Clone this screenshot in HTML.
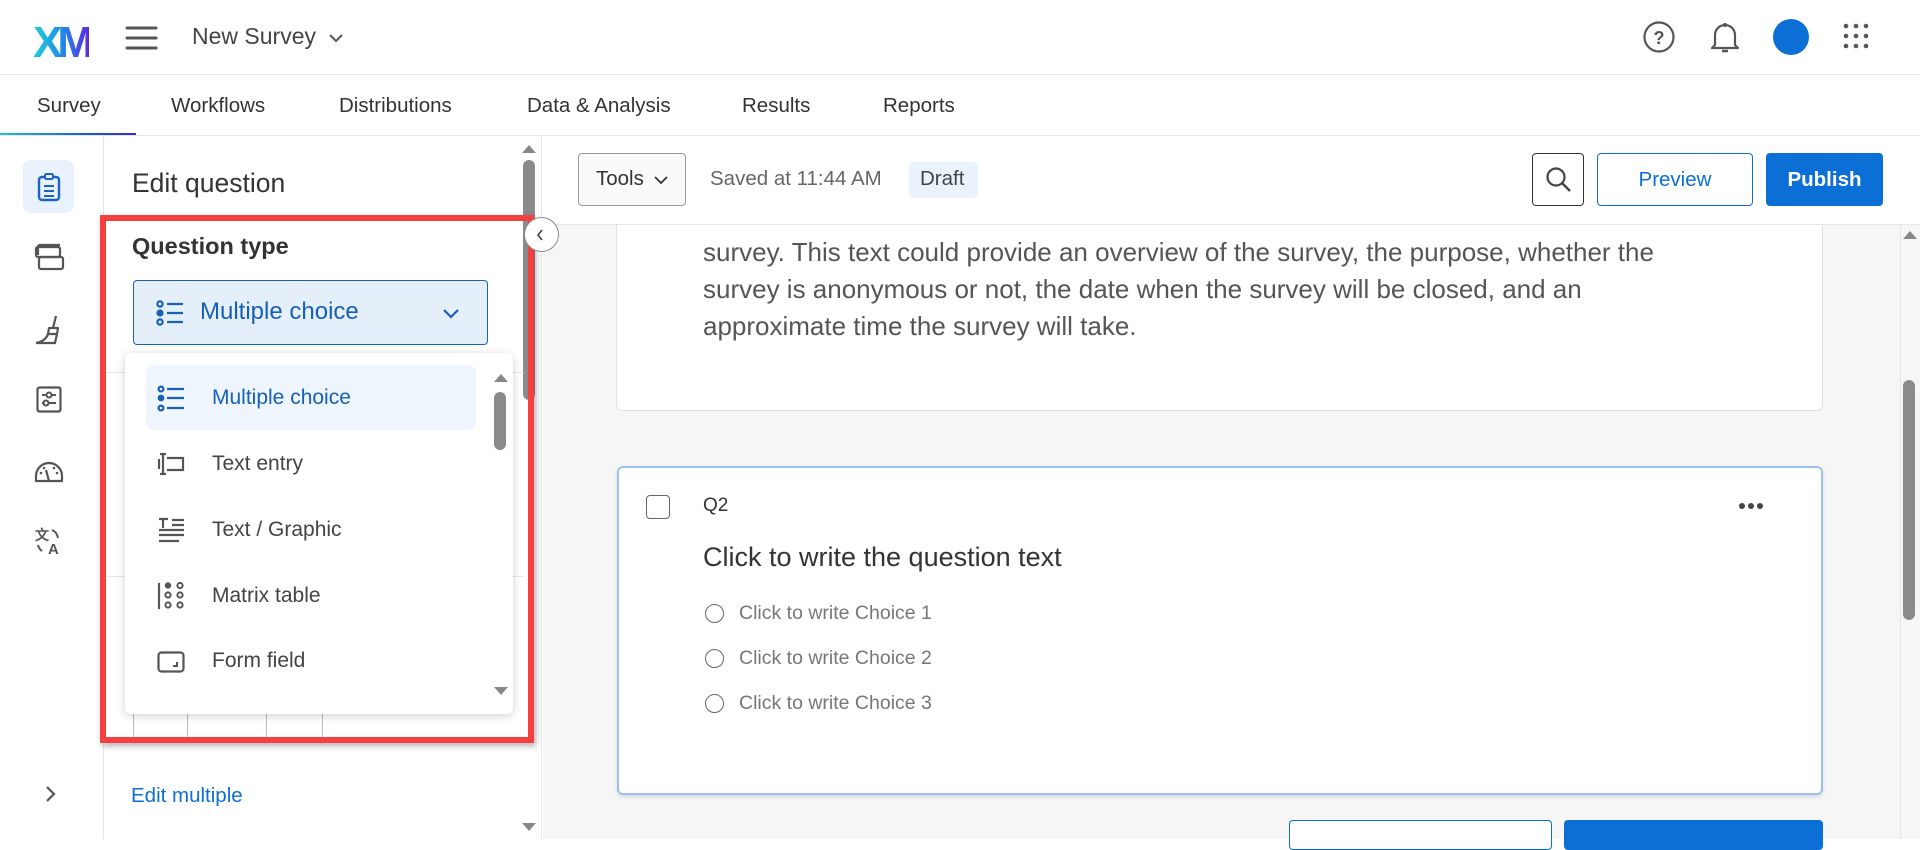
<!DOCTYPE html>
<html><head><meta charset="utf-8"><style>
*{box-sizing:border-box;margin:0;padding:0}
body{width:1920px;height:839px;overflow:hidden;font-family:"Liberation Sans",sans-serif;background:#fff;position:relative;color:#333}
.a{position:absolute}
svg{position:absolute;overflow:visible}
</style></head><body>
<!-- header -->
<div class="a" style="left:33px;top:18px;font:bold 44px 'Liberation Sans';letter-spacing:-5px;background:linear-gradient(90deg,#1fd0d8,#1d8de8 50%,#5b2ce0);-webkit-background-clip:text;color:transparent;line-height:50px">XM</div>
<svg style="left:126px;top:26px" width="32" height="24"><path d="M1 2H30M1 12H30M1 22H30" stroke="#555" stroke-width="3" stroke-linecap="round"/></svg>
<div class="a" style="left:192px;top:23px;font-size:23px;color:#444">New Survey</div>
<svg style="left:328px;top:33px" width="16" height="10"><path d="M2 2L8 8L14 2" stroke="#555" stroke-width="2" fill="none"/></svg>
<svg style="left:1643px;top:21px" width="32" height="32"><circle cx="16" cy="16" r="14.5" stroke="#555" stroke-width="2.2" fill="none"/><text x="16" y="23" font-size="18" font-weight="bold" text-anchor="middle" fill="#555" font-family="Liberation Sans">?</text></svg>
<svg style="left:1710px;top:20px" width="30" height="34"><path d="M5 25V15A10 10 0 0 1 25 15V25L28 28H2Z" stroke="#555" stroke-width="2.2" fill="none" stroke-linejoin="round"/><path d="M12 31H18" stroke="#555" stroke-width="2.5"/><circle cx="15" cy="5" r="2" fill="#555"/></svg>
<div class="a" style="left:1773px;top:19px;width:36px;height:36px;border-radius:50%;background:#0b6fd6"></div>
<svg style="left:1843px;top:24px" width="28" height="26"><g fill="#555"><circle cx="3" cy="2" r="2.3"/><circle cx="13" cy="2" r="2.3"/><circle cx="23" cy="2" r="2.3"/><circle cx="3" cy="12" r="2.3"/><circle cx="13" cy="12" r="2.3"/><circle cx="23" cy="12" r="2.3"/><circle cx="3" cy="22" r="2.3"/><circle cx="13" cy="22" r="2.3"/><circle cx="23" cy="22" r="2.3"/></g></svg>
<div class="a" style="left:0;top:74px;width:1920px;height:1px;background:#e6e6e6"></div>
<!-- tabs -->
<div class="a" style="top:94px;font-size:20.5px;color:#333;left:0;width:1920px;height:30px">
<span class="a" style="left:37px">Survey</span><span class="a" style="left:171px">Workflows</span><span class="a" style="left:339px">Distributions</span><span class="a" style="left:527px">Data &amp; Analysis</span><span class="a" style="left:742px">Results</span><span class="a" style="left:883px">Reports</span></div>
<div class="a" style="left:0;top:133px;width:136px;height:3px;background:linear-gradient(90deg,#1fc2d0,#1b5fd0 60%,#3a2ad0)"></div>
<div class="a" style="left:0;top:135px;width:1920px;height:1px;background:#e6e6e6"></div>
<!-- left rail -->
<div class="a" style="left:103px;top:136px;width:1px;height:703px;background:#e6e6e6"></div>
<div class="a" style="left:23px;top:160px;width:51px;height:53px;border-radius:8px;background:#e8f1fc"></div>
<svg style="left:37px;top:172px" width="24" height="30"><rect x="2" y="5" width="20" height="23" rx="3" stroke="#1a64c8" stroke-width="2.4" fill="none"/><rect x="8" y="2" width="8" height="5" rx="1.5" stroke="#1a64c8" stroke-width="2" fill="#e8f1fc"/><path d="M7 14H17M7 19H17M7 24H17" stroke="#1a64c8" stroke-width="2"/></svg>
<svg style="left:34px;top:243px" width="30" height="30"><path d="M4 12V4a2 2 0 0 1 2-2h20" stroke="#555" stroke-width="2.2" fill="none"/><rect x="2" y="4" width="24" height="10" rx="2" stroke="#555" stroke-width="2.2" fill="none"/><rect x="5" y="14" width="24" height="12" rx="2" stroke="#555" stroke-width="2.2" fill="none"/></svg>
<svg style="left:34px;top:314px" width="30" height="32"><path d="M22 2L19 14M15 14H24L23 20H14Z" stroke="#555" stroke-width="2.2" fill="none" stroke-linejoin="round"/><path d="M14 20C12 26 7 28 2 29H21L23 20" stroke="#555" stroke-width="2.2" fill="none"/></svg>
<svg style="left:36px;top:386px" width="26" height="27"><rect x="1.5" y="1.5" width="23" height="24" rx="2" stroke="#555" stroke-width="2.2" fill="none"/><path d="M6 9H20M6 17H20" stroke="#555" stroke-width="2"/><circle cx="13" cy="9" r="2.5" fill="#fff" stroke="#555" stroke-width="2"/><circle cx="10" cy="17" r="2.5" fill="#fff" stroke="#555" stroke-width="2"/></svg>
<svg style="left:34px;top:461px" width="30" height="22"><path d="M2 20V15A13 13 0 0 1 28 15V20Z" stroke="#555" stroke-width="2.2" fill="none" stroke-linejoin="round"/><path d="M15 20L12 9" stroke="#555" stroke-width="2.2"/><g fill="#555"><circle cx="7" cy="12" r="1.3"/><circle cx="10" cy="7" r="1.3"/><circle cx="20" cy="7" r="1.3"/><circle cx="23" cy="12" r="1.3"/></g></svg>
<svg style="left:35px;top:527px" width="28" height="28"><text x="0" y="13" font-size="14" fill="#555" font-weight="bold" font-family="Liberation Sans">文</text><text x="13" y="27" font-size="15" fill="#555" font-weight="bold" font-family="Liberation Sans">A</text><path d="M17 3Q22 5 23 11M3 18Q4 22 7 24" stroke="#555" stroke-width="2" fill="none"/></svg>
<svg style="left:45px;top:785px" width="12" height="18"><path d="M2 2L9 9L2 16" stroke="#555" stroke-width="2.2" fill="none"/></svg>
<!-- edit panel -->
<div class="a" style="left:104px;top:136px;width:438px;height:703px;background:#fff;border-right:1px solid #e6e6e6"></div>
<div class="a" style="left:523px;top:160px;width:12px;height:240px;border-radius:6px;background:#8a8a8a"></div>
<svg style="left:522px;top:144px" width="14" height="10"><path d="M0 9L7 1L14 9Z" fill="#888"/></svg>
<svg style="left:522px;top:822px" width="14" height="10"><path d="M0 1L7 9L14 1Z" fill="#888"/></svg>
<div class="a" style="left:132px;top:168px;font-size:26.5px;color:#333">Edit question</div>
<div class="a" style="left:104px;top:576px;width:420px;height:1px;background:#e6e6e6"></div>
<div class="a" style="left:104px;top:372px;width:420px;height:1px;background:#e6e6e6"></div>
<!-- stepper -->
<div class="a" style="left:133px;top:700px;width:190px;height:40px;border:1px solid #bbb;border-top:none"></div>
<div class="a" style="left:187px;top:700px;width:1px;height:40px;background:#bbb"></div>
<div class="a" style="left:266px;top:700px;width:1px;height:40px;background:#bbb"></div>
<div class="a" style="left:131px;top:784px;font-size:20.5px;color:#0b6fd6">Edit multiple</div>
<!-- red box -->
<div class="a" style="left:100px;top:215px;width:434px;height:528px;border:6px solid #f4403f;box-shadow:2px 3px 6px rgba(0,0,0,.3)"></div>
<div class="a" style="left:132px;top:233px;font-size:23.5px;font-weight:bold;color:#333">Question type</div>
<div class="a" style="left:133px;top:280px;width:355px;height:65px;background:#e5effa;border:1.5px solid #1660b8;border-radius:4px"></div>
<svg style="left:156px;top:300px" width="28" height="27"><g stroke="#1660b8" stroke-width="2.2" fill="none"><circle cx="4" cy="4" r="2.6"/><circle cx="4" cy="22" r="2.6"/><path d="M11 4H27M11 13H27M11 22H27"/></g><circle cx="4" cy="13" r="3.6" fill="#1660b8"/></svg>
<div class="a" style="left:200px;top:298px;font-size:24px;color:#1660b8">Multiple choice</div>
<svg style="left:442px;top:308px" width="18" height="12"><path d="M2 2L9 9L16 2" stroke="#1660b8" stroke-width="2.2" fill="none"/></svg>
<!-- menu -->
<div class="a" style="left:125px;top:353px;width:388px;height:361px;background:#fff;border-radius:6px;box-shadow:0 2px 10px rgba(0,0,0,.18)"></div>
<div class="a" style="left:146px;top:365px;width:330px;height:65px;background:#eef5fd;border-radius:8px"></div>
<svg style="left:494px;top:373px" width="14" height="10"><path d="M0 9L7 1L14 9Z" fill="#888"/></svg>
<div class="a" style="left:494px;top:392px;width:12px;height:58px;border-radius:6px;background:#8a8a8a"></div>
<svg style="left:494px;top:686px" width="14" height="10"><path d="M0 1L7 9L14 1Z" fill="#888"/></svg>
<svg style="left:157px;top:386px" width="28" height="26"><g stroke="#1660b8" stroke-width="2.2" fill="none"><circle cx="4" cy="3" r="2.4"/><circle cx="4" cy="22" r="2.4"/><path d="M10 3H27M10 12H27M10 22H27"/></g><circle cx="4" cy="12" r="3.4" fill="#1660b8"/></svg>
<div class="a" style="left:212px;top:386px;font-size:21px;color:#1660b8">Multiple choice</div>
<svg style="left:157px;top:450px" width="28" height="28"><g stroke="#555" stroke-width="2.2" fill="none"><path d="M6 4V24M3 4H9M3 24H9"/><path d="M10 8H26V20H10"/><path d="M2 9V19"/></g></svg>
<div class="a" style="left:212px;top:452px;font-size:21px;color:#444">Text entry</div>
<svg style="left:157px;top:517px" width="28" height="26"><g stroke="#555" stroke-width="2.2" fill="none"><path d="M2 2H11M6 2V11M15 3H27M15 8H27M2 13H27M2 18H27M2 24H22"/></g></svg>
<div class="a" style="left:212px;top:518px;font-size:21px;color:#444">Text / Graphic</div>
<svg style="left:157px;top:582px" width="28" height="28"><path d="M2 1V27" stroke="#555" stroke-width="2.2"/><circle cx="11" cy="3.5" r="3.2" fill="#555"/><g stroke="#555" stroke-width="2" fill="none"><circle cx="23" cy="3.5" r="2.6"/><circle cx="11" cy="13" r="2.6"/><circle cx="23" cy="13" r="2.6"/><circle cx="11" cy="23" r="2.6"/><circle cx="23" cy="23" r="2.6"/></g></svg>
<div class="a" style="left:212px;top:584px;font-size:21px;color:#444">Matrix table</div>
<svg style="left:157px;top:651px" width="28" height="22"><rect x="1.5" y="1.5" width="25" height="19" rx="3" stroke="#555" stroke-width="2.2" fill="none"/><path d="M20 11V15H16" stroke="#555" stroke-width="2" fill="none"/></svg>
<div class="a" style="left:212px;top:649px;font-size:21px;color:#444">Form field</div>
<!-- main canvas -->
<div class="a" style="left:543px;top:136px;width:1377px;height:703px;background:#f6f6f6"></div>
<div class="a" style="left:616px;top:224px;width:1207px;height:187px;background:#fff;border:1px solid #e2e2e2;border-top:none;border-radius:0 0 6px 6px"></div>
<div class="a" style="left:703px;top:234px;font-size:26px;line-height:37px;color:#555;width:1110px;white-space:nowrap">survey. This text could provide an overview of the survey, the purpose, whether the<br>survey is anonymous or not, the date when the survey will be closed, and an<br>approximate time the survey will take.</div>
<!-- toolbar -->
<div class="a" style="left:543px;top:136px;width:1377px;height:89px;background:#fff;border-bottom:1px solid #e6e6e6"></div>
<div class="a" style="left:578px;top:153px;width:108px;height:53px;border:1px solid #999;border-radius:4px;background:#fafafa"></div>
<div class="a" style="left:596px;top:167px;font-size:20.5px;color:#333">Tools</div>
<svg style="left:654px;top:175px" width="14" height="10"><path d="M1 2L7 8L13 2" stroke="#333" stroke-width="1.8" fill="none"/></svg>
<div class="a" style="left:710px;top:167px;font-size:20.5px;color:#666">Saved at 11:44 AM</div>
<div class="a" style="left:909px;top:162px;width:69px;height:36px;background:#eaf2fc;border-radius:4px"></div>
<div class="a" style="left:920px;top:167px;font-size:20.5px;color:#444">Draft</div>
<div class="a" style="left:1532px;top:153px;width:52px;height:53px;border:1px solid #333;border-radius:4px"></div>
<svg style="left:1545px;top:166px" width="28" height="28"><circle cx="11" cy="11" r="8.5" stroke="#444" stroke-width="2.2" fill="none"/><path d="M17 17L25 25" stroke="#444" stroke-width="2.4"/></svg>
<div class="a" style="left:1597px;top:153px;width:156px;height:53px;border:1px solid #0b6fd6;border-radius:4px;background:#fff;color:#0b6fd6;font-size:20.5px;text-align:center;line-height:51px">Preview</div>
<div class="a" style="left:1766px;top:153px;width:117px;height:53px;border-radius:4px;background:#0b6fd6;color:#fff;font-size:20.5px;text-align:center;line-height:53px;font-weight:bold">Publish</div>
<div class="a" style="left:524px;top:217px;width:35px;height:35px;border-radius:50%;border:1px solid #888;background:#fff"></div>
<svg style="left:535px;top:228px" width="10" height="14"><path d="M7 2L3 7L7 12" stroke="#444" stroke-width="1.6" fill="none"/></svg>
<!-- Q2 card -->
<div class="a" style="left:617px;top:466px;width:1206px;height:329px;background:#fff;border:2px solid #99c3ee;border-radius:6px;box-shadow:0 2px 4px rgba(0,0,0,.12)"></div>
<div class="a" style="left:646px;top:495px;width:24px;height:24px;border:1.5px solid #666;border-radius:4px"></div>
<div class="a" style="left:703px;top:495px;font-size:19px;color:#333">Q2</div>
<svg style="left:1738px;top:502px" width="28" height="8"><g fill="#444"><circle cx="4" cy="4" r="3"/><circle cx="13" cy="4" r="3"/><circle cx="22" cy="4" r="3"/></g></svg>
<div class="a" style="left:703px;top:542px;font-size:27px;color:#333">Click to write the question text</div>
<div class="a" style="left:705px;top:604px;width:19px;height:19px;border:1.5px solid #666;border-radius:50%"></div>
<div class="a" style="left:739px;top:602px;font-size:19.5px;color:#777">Click to write Choice 1</div>
<div class="a" style="left:705px;top:649px;width:19px;height:19px;border:1.5px solid #666;border-radius:50%"></div>
<div class="a" style="left:739px;top:647px;font-size:19.5px;color:#777">Click to write Choice 2</div>
<div class="a" style="left:705px;top:694px;width:19px;height:19px;border:1.5px solid #666;border-radius:50%"></div>
<div class="a" style="left:739px;top:692px;font-size:19.5px;color:#777">Click to write Choice 3</div>
<div class="a" style="left:1289px;top:820px;width:263px;height:30px;border:1px solid #0b6fd6;border-radius:4px;background:#fff"></div>
<div class="a" style="left:1564px;top:820px;width:259px;height:30px;border-radius:4px;background:#0b6fd6"></div>
<!-- right scrollbar -->
<div class="a" style="left:1900px;top:225px;width:20px;height:614px;background:#f6f6f6;border-left:1px solid #e6e6e6"></div>
<svg style="left:1903px;top:230px" width="14" height="10"><path d="M0 9L7 1L14 9Z" fill="#888"/></svg>
<div class="a" style="left:1903px;top:380px;width:12px;height:240px;border-radius:6px;background:#8a8a8a"></div>
</body></html>
